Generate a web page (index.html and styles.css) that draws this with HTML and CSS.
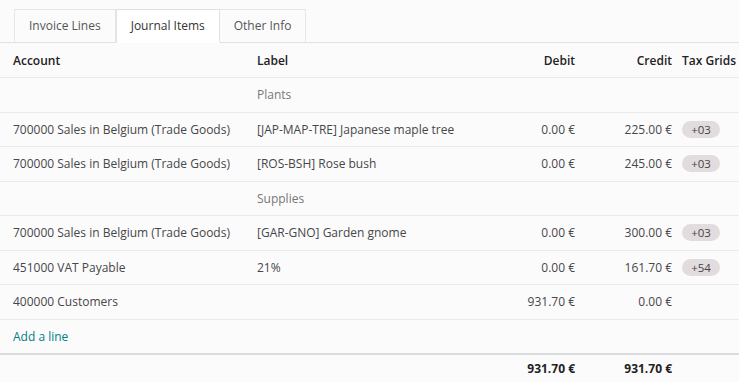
FILE: index.html
```html
<!DOCTYPE html>
<html lang="en">
<head>
    <meta charset="UTF-8">
    <title>Journal Items</title>
    <link rel="stylesheet" href="styles.css">
</head>
<body>
    <div class="notebook">
        <ul class="tabs">
            <li class="tab">Invoice Lines</li>
            <li class="tab active">Journal Items</li>
            <li class="tab">Other Info</li>
        </ul>

        <table class="lines">
            <colgroup>
                <col class="c-account">
                <col class="c-label">
                <col class="c-debit">
                <col class="c-credit">
                <col class="c-tax">
            </colgroup>
            <thead>
                <tr>
                    <th>Account</th>
                    <th>Label</th>
                    <th class="num">Debit</th>
                    <th class="num">Credit</th>
                    <th class="tax">Tax Grids</th>
                </tr>
            </thead>
            <tbody>
                <tr class="section">
                    <td></td><td>Plants</td><td></td><td></td><td></td>
                </tr>
                <tr>
                    <td>700000 Sales in Belgium (Trade Goods)</td>
                    <td>[JAP-MAP-TRE] Japanese maple tree</td>
                    <td class="num">0.00 €</td>
                    <td class="num">225.00 €</td>
                    <td class="tax"><span class="badge">+03</span></td>
                </tr>
                <tr>
                    <td>700000 Sales in Belgium (Trade Goods)</td>
                    <td>[ROS-BSH] Rose bush</td>
                    <td class="num">0.00 €</td>
                    <td class="num">245.00 €</td>
                    <td class="tax"><span class="badge">+03</span></td>
                </tr>
                <tr class="section">
                    <td></td><td>Supplies</td><td></td><td></td><td></td>
                </tr>
                <tr>
                    <td>700000 Sales in Belgium (Trade Goods)</td>
                    <td>[GAR-GNO] Garden gnome</td>
                    <td class="num">0.00 €</td>
                    <td class="num">300.00 €</td>
                    <td class="tax"><span class="badge">+03</span></td>
                </tr>
                <tr>
                    <td>451000 VAT Payable</td>
                    <td>21%</td>
                    <td class="num">0.00 €</td>
                    <td class="num">161.70 €</td>
                    <td class="tax"><span class="badge">+54</span></td>
                </tr>
                <tr>
                    <td>400000 Customers</td>
                    <td></td>
                    <td class="num">931.70 €</td>
                    <td class="num">0.00 €</td>
                    <td></td>
                </tr>
                <tr class="add-row">
                    <td colspan="5"><a href="#">Add a line</a></td>
                </tr>
            </tbody>
            <tfoot>
                <tr>
                    <td></td>
                    <td></td>
                    <td class="num">931.70 €</td>
                    <td class="num">931.70 €</td>
                    <td></td>
                </tr>
            </tfoot>
        </table>
    </div>
</body>
</html>
```

FILE: styles.css
```css
/* Global Settings */
* {
    box-sizing: border-box;
    margin: 0;
    padding: 0;
}

body {
    background-color: #fcfbfc;
    color: #454748;
    font-family: 'Open Sans', sans-serif;
    font-size: 12px;
    overflow: hidden;
}

.notebook {
    padding-top: 9px;
}

/* Tabs */
.tabs {
    list-style: none;
    display: flex;
    padding-left: 14px;
    border-bottom: 1px solid #dee2e6;
}

.tab {
    height: 34px;
    line-height: 32px;
    padding: 0 14px;
    margin-bottom: -1px;
    border: 1px solid #e4e6ea;
    border-bottom-color: #dee2e6;
    border-left: none;
    color: #555;
}

.tab:first-child {
    border-left: 1px solid #e4e6ea;
}

.tab.active {
    background-color: #fff;
    border-color: #dee2e6;
    border-left: 1px solid #dee2e6;
    border-bottom-color: #fff;
    color: #333;
}

/* Table */
.lines {
    width: 739px;
    table-layout: fixed;
    border-collapse: collapse;
}

.c-account { width: 249px; }
.c-label { width: 234px; }
.c-debit { width: 100px; }
.c-credit { width: 97px; }
.c-tax { width: 59px; }

.lines th,
.lines td {
    height: 34.5px;
    padding: 0 8px;
    text-align: left;
    white-space: nowrap;
    overflow: visible;
    border-bottom: 1px solid #e9eaec;
}

.lines th {
    font-weight: 600;
    color: #222;
}

.lines th:first-child,
.lines td:first-child {
    padding-left: 13px;
}

.lines .num {
    text-align: right;
}

.lines .tax {
    padding: 0 0 0 2px;
}

.section td {
    color: #777;
}

.badge {
    display: inline-block;
    width: 38px;
    height: 17px;
    line-height: 17px;
    border-radius: 9px;
    background-color: #e2dcdf;
    color: #444;
    font-size: 11.5px;
    text-align: center;
}

.add-row td {
    border-bottom: 2px solid #dadbdd;
}

.add-row a {
    color: #017e84;
    text-decoration: none;
}

.lines tfoot td {
    height: 29px;
    border-bottom: none;
    font-weight: 700;
    color: #222;
}
```
